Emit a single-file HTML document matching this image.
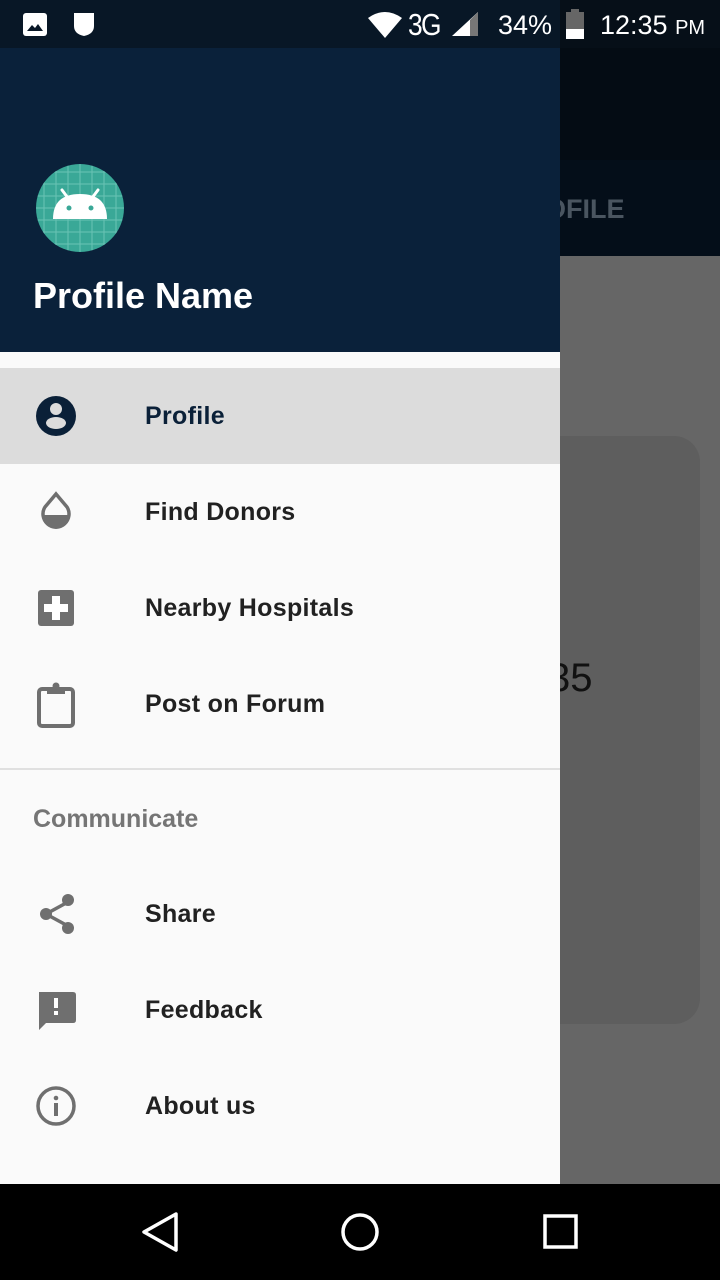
<!DOCTYPE html>
<html><head><style>
*{margin:0;padding:0;box-sizing:border-box}
body{width:720px;height:1280px;position:relative;overflow:hidden;background:#666;font-family:"Liberation Sans",Roboto,sans-serif}
.abs{position:absolute}
.item{position:absolute;left:0;width:560px;height:96px}
.item .t{position:absolute;left:145px;top:34px;font-size:25px;color:#212121;font-weight:bold;letter-spacing:0.3px}
.item svg{position:absolute;left:34px;top:26px}
</style></head><body>
<div class="abs" style="left:0;top:0;width:720px;height:48px;background:#081726"></div>
<div class="abs" style="left:560px;top:0;width:160px;height:48px;background:#060f18"></div>
<div class="abs" style="left:560px;top:48px;width:160px;height:112px;background:#040c14"></div>
<div class="abs" style="left:560px;top:160px;width:160px;height:96px;background:#040e19"></div>
<div class="abs" style="top:194px;font-size:27px;color:#4a5560;font-weight:bold;left:545px">OFILE</div>
<div class="abs" style="left:560px;top:256px;width:160px;height:928px;background:#666"></div>
<div class="abs" style="left:500px;top:436px;width:200px;height:588px;background:#5e5e5e;border-radius:26px"></div>
<div class="abs" style="left:548px;top:656px;font-size:40px;color:#111">35</div>
<!-- status bar icons -->
<svg class="abs" style="left:22px;top:12px" width="28" height="26"><rect x="1" y="1" width="24" height="23" rx="3" fill="#fff"/><path d="M5 19 L10 13 L13 16 L16 12 L21 19Z" fill="#081726"/></svg>
<svg class="abs" style="left:72px;top:12px" width="24" height="26"><path d="M2 1 H22 V14 Q22 22 12 24 Q2 22 2 14Z" fill="#fff"/></svg>
<svg class="abs" style="left:366px;top:10px" width="40" height="30"><path d="M2 8 Q19 -4 36 8 L19 28Z" fill="#fff"/></svg>
<div class="abs" style="left:408px;top:7px;font-size:31px;color:#fff;letter-spacing:-2px;transform:scaleX(0.85);transform-origin:left">3G</div>
<svg class="abs" style="left:450px;top:10px" width="30" height="28"><path d="M28 2 V26 H2Z" fill="#fff"/><path d="M28 2 V26 H20 V10Z" fill="#777"/></svg>
<div class="abs" style="left:498px;top:10px;font-size:27px;color:#fff">34%</div>
<svg class="abs" style="left:564px;top:9px" width="22" height="32"><rect x="7" y="0" width="8" height="4" fill="#666"/><rect x="2" y="3" width="18" height="27" fill="#666"/><rect x="2" y="20" width="18" height="10" fill="#fff"/></svg>
<div class="abs" style="left:600px;top:10px;font-size:27px;color:#fff">12:35 <span style="font-size:20px">PM</span></div>
<!-- drawer -->
<div class="abs" style="left:0;top:48px;width:560px;height:1136px;background:#fafafa"></div>
<div class="abs" style="left:0;top:48px;width:560px;height:304px;background:#0a213a"></div>
<svg class="abs" style="left:36px;top:164px" width="88" height="88">
<defs><clipPath id="c"><circle cx="44" cy="44" r="44"/></clipPath></defs>
<circle cx="44" cy="44" r="44" fill="#3aa897"/>
<g clip-path="url(#c)" stroke="#7fcfc0" stroke-width="1" opacity="0.7">
<path d="M8 0V88M20 0V88M32 0V88M44 0V88M56 0V88M68 0V88M80 0V88M0 8H88M0 20H88M0 32H88M0 44H88M0 56H88M0 68H88M0 80H88"/></g>
<path d="M17 55 Q17 30 44 30 Q71 30 71 55Z" fill="#fff"/>
<path d="M26 26 L32 34 M62 26 L56 34" stroke="#fff" stroke-width="3" stroke-linecap="round"/>
<circle cx="33" cy="44" r="2.5" fill="#3aa897"/><circle cx="55" cy="44" r="2.5" fill="#3aa897"/>
</svg>
<div class="abs" style="left:33px;top:275px;font-size:36px;color:#fff;font-weight:bold">Profile Name</div>
<div class="item" style="top:368px;background:#dcdcdc">
<svg width="44" height="44" viewBox="0 0 44 44"><circle cx="22" cy="22" r="20" fill="#0a2038"/><circle cx="22" cy="15" r="6" fill="#dcdcdc"/><ellipse cx="22" cy="29" rx="10" ry="6" fill="#dcdcdc"/></svg>
<div class="t" style="color:#0a2038">Profile</div></div>
<div class="item" style="top:464px">
<svg width="44" height="44" viewBox="0 0 44 44"><path d="M22 4 L33 17 A13 13 0 1 1 11 17Z" fill="none" stroke="#6f6f6f" stroke-width="3.5"/><path d="M8 25 H36 A14 14 0 0 1 8 25Z" fill="#6f6f6f"/></svg>
<div class="t">Find Donors</div></div>
<div class="item" style="top:560px">
<svg width="44" height="44" viewBox="0 0 44 44"><rect x="4" y="4" width="36" height="36" rx="3" fill="#6f6f6f"/><path d="M18 10H26V18H34V26H26V34H18V26H10V18H18Z" fill="#fff"/></svg>
<div class="t">Nearby Hospitals</div></div>
<div class="item" style="top:656px">
<svg width="44" height="48" viewBox="0 0 44 48"><rect x="5" y="7" width="34" height="37" rx="3" fill="none" stroke="#6f6f6f" stroke-width="4"/><rect x="13" y="5" width="18" height="7" fill="#6f6f6f"/><circle cx="22" cy="4" r="3.5" fill="#6f6f6f"/></svg>
<div class="t">Post on Forum</div></div>
<div class="abs" style="left:0;top:768px;width:560px;height:2px;background:#e0e0e0"></div>
<div class="abs" style="left:33px;top:805px;font-size:25px;color:#757575;font-weight:bold">Communicate</div>
<div class="item" style="top:866px">
<svg width="44" height="44" viewBox="0 0 44 44"><path d="M34 10 L12 22 L34 34" stroke="#6f6f6f" stroke-width="3.5" fill="none"/><circle cx="34" cy="8" r="6" fill="#6f6f6f"/><circle cx="12" cy="22" r="6" fill="#6f6f6f"/><circle cx="34" cy="36" r="6" fill="#6f6f6f"/></svg>
<div class="t">Share</div></div>
<div class="item" style="top:962px">
<svg width="44" height="44" viewBox="0 0 44 44"><path d="M5 4 H39 Q42 4 42 7 V32 Q42 35 39 35 H12 L5 42Z" fill="#6f6f6f"/><rect x="20" y="10" width="4" height="10" fill="#fff"/><rect x="20" y="23" width="4" height="4" fill="#fff"/></svg>
<div class="t">Feedback</div></div>
<div class="item" style="top:1058px">
<svg width="44" height="44" viewBox="0 0 44 44"><circle cx="22" cy="22" r="18" fill="none" stroke="#6f6f6f" stroke-width="3.5"/><rect x="20" y="19" width="4" height="13" fill="#6f6f6f"/><circle cx="22" cy="14" r="2.3" fill="#6f6f6f"/></svg>
<div class="t">About us</div></div>
<!-- nav bar -->
<div class="abs" style="left:0;top:1184px;width:720px;height:96px;background:#000"></div>
<svg class="abs" style="left:140px;top:1210px" width="440" height="46">
<path d="M36 4 L4 22 L36 40Z" fill="none" stroke="#fff" stroke-width="3.5" stroke-linejoin="round"/>
<circle cx="220" cy="22" r="17" fill="none" stroke="#fff" stroke-width="3.5"/>
<rect x="405" y="6" width="31" height="31" fill="none" stroke="#fff" stroke-width="3.5"/>
</svg>
</body></html>
